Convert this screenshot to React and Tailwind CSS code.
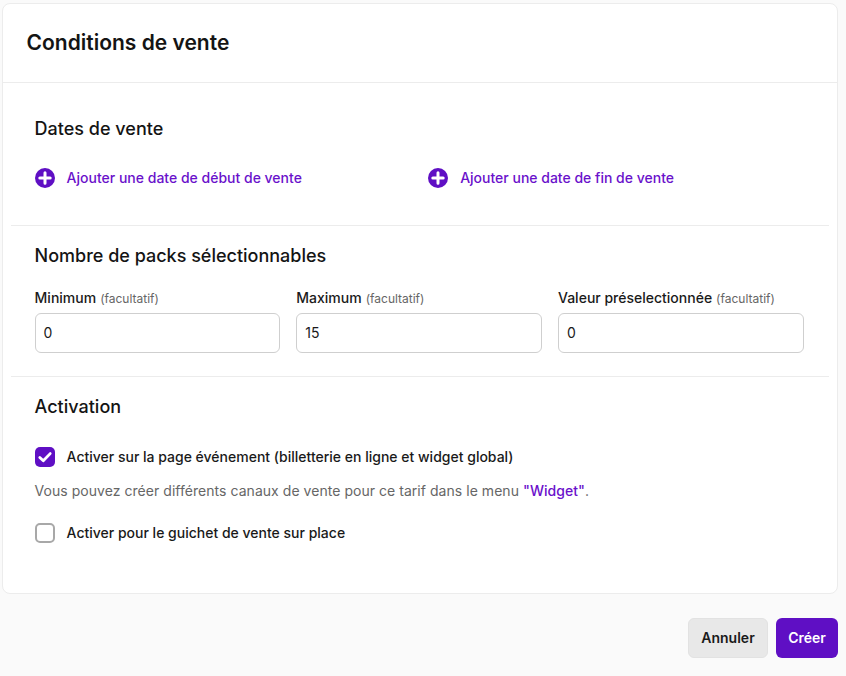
const font = { fontFamily: "Inter, sans-serif" };

function PlusIcon() {
  return (
    <svg viewBox="0 0 20 20" className="h-5 w-5 shrink-0">
      <circle cx="10" cy="10" r="10" fill="#5f0fc4" />
      <path d="M10 4.8v10.4M4.8 10h10.4" stroke="#fff" strokeWidth="3" strokeLinecap="round" />
    </svg>
  );
}

function AddLink({ children }) {
  return (
    <div className="flex h-5 items-center gap-3">
      <PlusIcon />
      <span className="text-sm leading-5 font-[450] text-[#6a11cb]">{children}</span>
    </div>
  );
}

function Field({ label, value }) {
  return (
    <div>
      <div className="flex h-5 items-baseline gap-1 text-sm leading-5 font-[450] text-[#1a1a1a]">
        {label}
        <span className="text-xs font-normal text-[#666]">(facultatif)</span>
      </div>
      <div className="mt-[5px] flex h-10 items-center rounded-md border border-[#cfcfcf] bg-white px-2 text-sm text-[#1a1a1a]">
        {value}
      </div>
    </div>
  );
}

export default function App() {
  return (
    <div style={font} className="flex min-h-[676px] flex-col bg-[#fafafa] pt-[3px] pr-2 pl-[2px]">
      <div className="h-[591px] rounded-lg border border-[#ececec] bg-white">
        <div className="flex h-[79px] items-center border-b border-[#ececec] pr-6 pl-[23.6px]">
          <h1 className="text-[21px] font-semibold text-[#141414]">Conditions de vente</h1>
        </div>
        <div className="px-2">
          <section className="h-[143px] border-b border-[#ececec] pt-8 pr-[25.3px] pl-[23.6px]">
            <h2 className="text-lg leading-7 font-[450] text-[#141414]">Dates de vente</h2>
            <div className="mt-[25px] grid grid-cols-2 gap-[18px]">
              <AddLink>Ajouter une date de début de vente</AddLink>
              <AddLink>Ajouter une date de fin de vente</AddLink>
            </div>
          </section>
          <section className="h-[151px] border-b border-[#ececec] pt-4 pr-[25.3px] pl-[23.6px]">
            <h2 className="text-lg leading-7 font-[450] text-[#141414]">Nombre de packs sélectionnables</h2>
            <div className="mt-[18px] grid grid-cols-3 gap-4">
              <Field label="Minimum" value="0" />
              <Field label="Maximum" value="15" />
              <Field label="Valeur préselectionnée" value="0" />
            </div>
          </section>
          <section className="pt-4 pr-[25.3px] pl-[23.6px]">
            <h2 className="text-lg leading-7 font-[450] text-[#141414]">Activation</h2>
            <div className="mt-[26px] flex h-5 items-center gap-3">
              <span className="flex h-5 w-5 items-center justify-center rounded-[5px] bg-[#5f0fc4]">
                <svg viewBox="0 0 20 20" className="h-5 w-5">
                  <path d="M4.8 10.4l3.5 3.4 6.9-7.2" fill="none" stroke="#fff" strokeWidth="2.8" strokeLinecap="round" strokeLinejoin="round" />
                </svg>
              </span>
              <span className="text-sm font-[450] text-[#1a1a1a]">Activer sur la page événement (billetterie en ligne et widget global)</span>
            </div>
            <p className="mt-[14px] text-sm leading-5 tracking-[0.04px] text-[#666]">
              Vous pouvez créer différents canaux de vente pour ce tarif dans le menu{" "}
              <span className="font-medium text-[#6a11cb]">"Widget"</span>.
            </p>
            <div className="mt-[22px] flex h-5 items-center gap-3">
              <span className="h-5 w-5 rounded-[5px] border-2 border-[#a8a8a8] bg-white" />
              <span className="text-sm font-[450] text-[#1a1a1a]">Activer pour le guichet de vente sur place</span>
            </div>
          </section>
        </div>
      </div>
      <div className="mt-6 flex justify-end gap-2">
        <button className="h-10 w-20 rounded-md border border-[#e2e2e2] bg-[#e8e8e8] text-sm font-semibold text-[#1a1a1a]">Annuler</button>
        <button className="h-10 w-[62px] rounded-md bg-[#5f0fc4] text-sm font-semibold text-white">Créer</button>
      </div>
    </div>
  );
}
